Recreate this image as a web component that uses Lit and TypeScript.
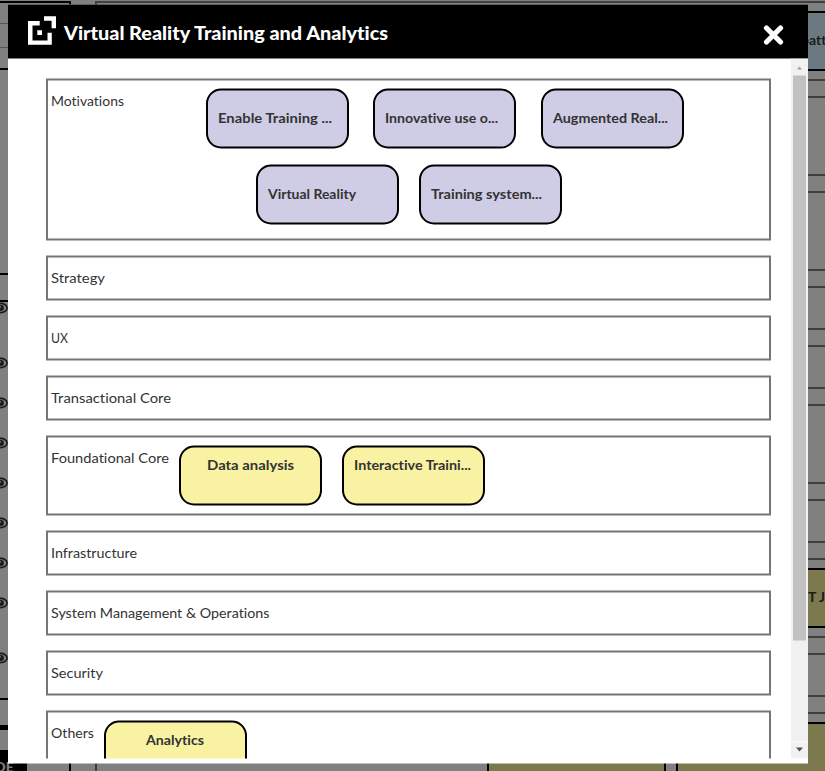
import { LitElement, html, svg, css } from "lit";
import { customElement } from "lit/decorators.js";

interface Card { name: string; x: number; w: number; tx: number; }
interface Layer { title: string; tw: number; kind: string; rows: Card[][]; }

const card = (name: string, x: number, w: number, tx: number): Card => ({ name, x, w, tx });
const LAYERS: Layer[] = [
  { title: "Motivations", tw: 73, kind: "motivation", rows: [
    [card("Enable Training ...", 0, 114, 10), card("Innovative use o...", 24, 113, 10), card("Augmented Real...", 25, 115, 9.5)],
    [card("Virtual Reality", 50, 88, 9.5), card("Training system...", 20, 111, 9.5)] ] },
  { title: "Strategy", tw: 54, kind: "", rows: [] },
  { title: "UX", tw: 17, kind: "", rows: [] },
  { title: "Transactional Core", tw: 120, kind: "", rows: [] },
  { title: "Foundational Core", tw: 118, kind: "core", rows: [
    [card("Data analysis", 0, 87, 26), card("Interactive Traini...", 20, 117, 10)] ] },
  { title: "Infrastructure", tw: 86, kind: "", rows: [] },
  { title: "System Management & Operations", tw: 218.5, kind: "", rows: [] },
  { title: "Security", tw: 52, kind: "", rows: [] },
  { title: "Others", tw: 43, kind: "others", rows: [[card("Analytics", 0, 58, 40)]] },
];
const RULES = [79, 96, 174, 191, 269, 286, 328, 345, 387, 404, 482, 499, 541, 558, 636, 653, 695, 712];
const EYES = [308, 363, 403, 443, 483, 523, 563, 603, 658];

const label = (text: string, width: number, cls: string) => html`<svg class="label ${cls}" width=${Math.floor(width) + 2} height="20"><text x="0" y="14" textLength=${width} lengthAdjust="spacingAndGlyphs">${text}</text></svg>`;

@customElement("app-root")
export class AppRoot extends LitElement {
  static styles = css`
    :host { display: block; position: relative; width: 825px; height: 771px; overflow: hidden; background: #808080; font-family: Lato, sans-serif; font-variant-ligatures: none; }
    .canvas { position: absolute; inset: 0; }
    .modal { position: relative; width: 800px; height: 759px; margin-left: 8px; top: 4px; transform: translateY(0.5px); background: #fff; display: flex; flex-direction: column; }
    header { height: 54px; flex: none; background: #000; display: flex; box-sizing: border-box; padding: 11px 23px 0 19px; }
    .logo { flex: none; display: block; }
    .label { display: block; flex: none; overflow: visible; font-size: 14px; fill: #333; }
    .label.title { margin: 10px 0 0 7px; fill: #fff; font-size: 18px; font-weight: 900; }
    .close { margin: 9px 0 0 auto; }
    .body { height: 700px; flex: none; display: flex; overflow: hidden; }
    .layers { flex: 1; display: flex; flex-direction: column; gap: 15px; padding: 20px 20px 0 38px; }
    .layer { flex: none; box-sizing: border-box; height: 45px; border: 2px solid #757575; display: flex; padding: 0 3px; }
    .layer.motivation { height: 162px; }
    .layer.core, .layer.others { height: 80px; }
    .heading { margin-top: 11px; }
    .rows { padding: 8px 0 0 8px; display: flex; flex-direction: column; gap: 16px; }
    .motivation .rows { padding-left: 80px; }
    .row { display: flex; }
    .card { box-sizing: border-box; width: 143px; height: 60px; border: 2px solid #000; border-radius: 15px; background: #f8f2a2; padding-top: 8px; }
    .motivation .card { background: #cfcce5; padding-top: 18px; }
    .name { font-weight: 700; }
    .bar { width: 17px; height: 700px; flex: none; background: #f1f1f1; display: flex; flex-direction: column; align-items: center; }
    .thumb { width: 13px; height: 565px; background: #c1c1c1; }
    .rest { flex: 1; }
    .down { border-top: 1px solid #fff; width: 17px; }
    .bar svg { display: block; }
  `;

  backdrop() {
    return html`<svg class="canvas" width="825" height="771">
      <g shape-rendering="crispEdges">
        <path d="M0 1h71v4H69V3H0zM0 68h8v2H0zM0 273h8v2H0zM0 300h8v2H0zM0 698h8v2H0zM0 725h8v5H0zM0 750h27v21H0zM69 760h2v11h-2z" fill="#000"/>
        <path d="M95 1h730v2H97v2h-2zM95 760h2v11h-2z" fill="#404040"/>
        <path d="M0 23h8v1H0zM0 47h8v1H0z" fill="#555"/>
        ${RULES.map((y) => svg`<rect x="808" y=${y} width="17" height="2" fill="#404040"/>`)}
        <rect x="800" y="12" width="30" height="58" fill="#6b7a80" stroke="#000" stroke-width="2"/>
        <rect x="800" y="569" width="30" height="58" fill="#7d794f" stroke="#000" stroke-width="2"/>
        <rect x="677" y="723" width="160" height="60" fill="#7d794f" stroke="#000" stroke-width="2"/>
        <rect x="488" y="723" width="177" height="60" fill="#7d794f" stroke="#000" stroke-width="2"/>
      </g>
      ${EYES.map((y) => svg`<g><ellipse cx="0.500" cy=${y} rx="6.600" ry="4.600" fill="#808080" stroke="#1a1a1a" stroke-width="1.600"/><circle cx="1" cy=${y} r="2.900" fill="#1a1a1a"/><circle cx="0" cy=${y - 1} r="0.900" fill="#808080"/></g>`)}
      <text x="801" y="45" font-size="14" font-weight="700" fill="#1a1a1a">patt</text>
      <text x="808" y="602" font-size="14" font-weight="700" fill="#1a1a1a" textLength="17">T J</text>
      <text x="-5" y="772" font-size="14" font-weight="900" fill="#808080">DE</text>
    </svg>`;
  }

  render() {
    return html`
      ${this.backdrop()}
      <div class="modal">
        <header>
          <svg class="logo" width="30" height="30" viewBox="27 15.5 30 30"><path fill="#fff" d="M28 21h11.700v4.500H32.500v15h15v-7.700H51.800v12H28zM44 16.300h12v12h-4.400v-7.600H44zM37.300 30.300h4.700v4.700h-4.700z"/></svg>
          ${label("Virtual Reality Training and Analytics", 324, "title")}
          <svg class="close" width="22" height="22" viewBox="0 0 22 22"><path d="M3.500 3.500l14 14M17.500 3.500L3.500 17.500" stroke="#fff" stroke-width="5.200" stroke-linecap="round"/></svg>
        </header>
        <div class="body">
          <div class="layers">
            ${LAYERS.map((l) => html`<section class="layer ${l.kind}">
              ${label(l.title, l.tw, "heading")}
              ${l.rows.length ? html`<div class="rows">${l.rows.map((r) => html`<div class="row">
                ${r.map((c) => html`<div class="card" style="margin-left:${c.x}px;padding-left:${c.tx}px">${label(c.name, c.w, "name")}</div>`)}
              </div>`)}</div>` : ""}
            </section>`)}
          </div>
          <div class="bar">
            <svg width="17" height="17"><path d="M6 11h5L8.500 8z" fill="#a0a0a0"/></svg>
            <div class="thumb"></div><div class="rest"></div>
            <div class="down"><svg width="17" height="16"><path d="M5 5h7L8.500 9z" fill="#505050"/></svg></div>
          </div>
        </div>
      </div>`;
  }
}
